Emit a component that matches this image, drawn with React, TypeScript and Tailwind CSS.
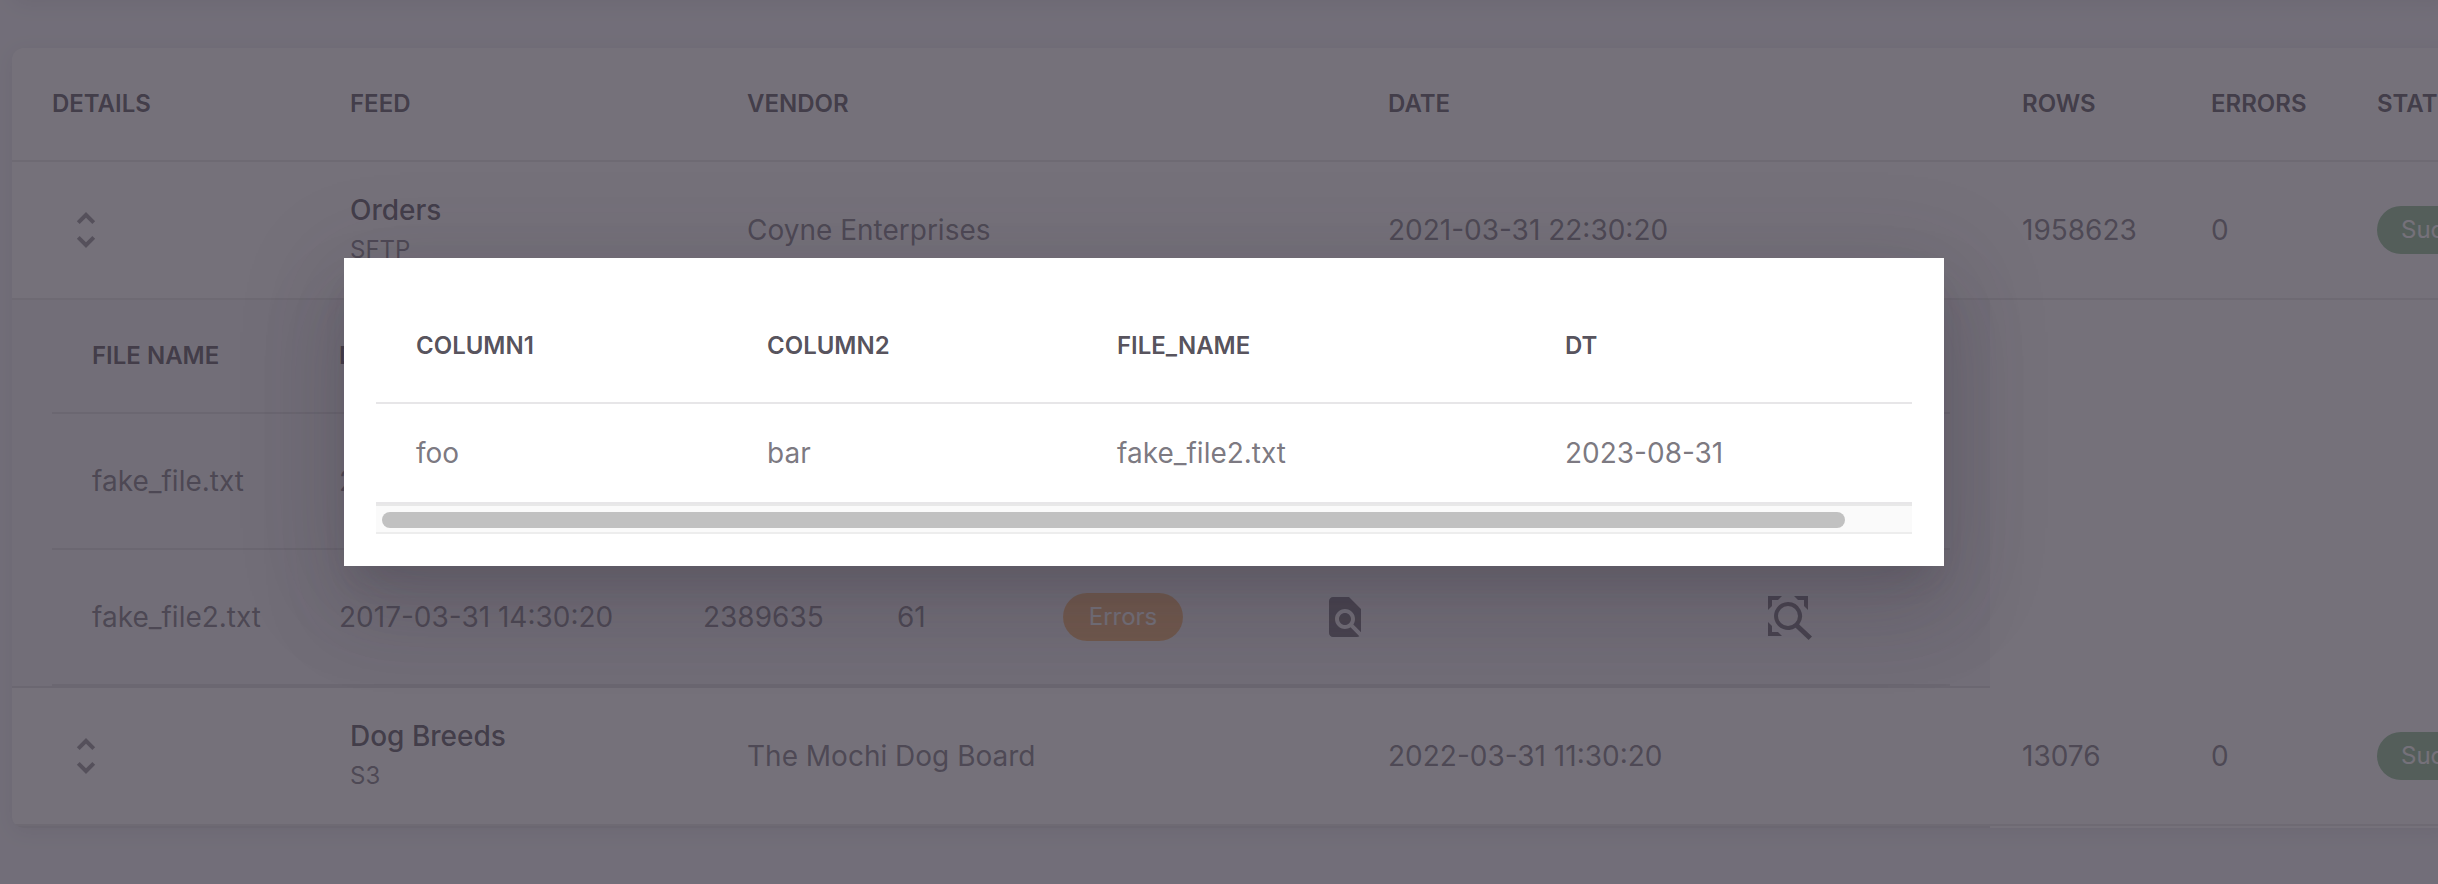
import React from 'react'

type Status = 'Success' | 'Errors'

interface Feed {
  name: string
  protocol: string
  vendor: string
  date: string
  rows: string
  errors: string
  status: Status
  files: FeedFile[]
}

interface FeedFile {
  name: string
  date: string
  rows: string
  errors: string
  status: Status
}

const feeds: Feed[] = [
  {
    name: 'Orders',
    protocol: 'SFTP',
    vendor: 'Coyne Enterprises',
    date: '2021-03-31 22:30:20',
    rows: '1958623',
    errors: '0',
    status: 'Success',
    files: [
      { name: 'fake_file.txt', date: '2021-03-31 22:30:20', rows: '1958623', errors: '0', status: 'Success' },
      { name: 'fake_file2.txt', date: '2017-03-31 14:30:20', rows: '2389635', errors: '61', status: 'Errors' },
    ],
  },
  {
    name: 'Dog Breeds',
    protocol: 'S3',
    vendor: 'The Mochi Dog Board',
    date: '2022-03-31 11:30:20',
    rows: '13076',
    errors: '0',
    status: 'Success',
    files: [],
  },
]

const line = 'border-b-2 border-[#3a3541]/12'
const head =
  'h-[114px] pl-8 first:pl-10 text-left align-middle text-2xl font-semibold whitespace-nowrap text-[#3a3541]/87 ' + line
const cell = 'pl-8 first:pl-10 align-middle whitespace-nowrap ' + line

function UnfoldIcon() {
  return (
    <svg viewBox="0 0 24 24" className="size-12 fill-[#3a3541]/54" aria-hidden="true">
      <path d="M12 5.83 15.17 9l1.41-1.41L12 3 7.41 7.59 8.83 9zm0 12.34L8.83 15l-1.41 1.41L12 21l4.59-4.59L15.17 15z" />
    </svg>
  )
}

function FindInPageIcon() {
  return (
    <svg viewBox="0 0 24 24" className="size-12 fill-[#3a3541]/75" aria-hidden="true">
      <path d="M20 19.59V8l-6-6H6c-1.1 0-1.99.9-1.99 2L4 20c0 1.1.89 2 1.99 2H18c.45 0 .85-.15 1.19-.4l-4.43-4.43c-.8.52-1.74.83-2.76.83-2.76 0-5-2.24-5-5s2.24-5 5-5 5 2.24 5 5c0 1.02-.31 1.96-.83 2.75zM9 13c0 1.66 1.34 3 3 3s3-1.34 3-3-1.34-3-3-3-3 1.34-3 3" />
    </svg>
  )
}

function ScanSearchIcon() {
  return (
    <svg viewBox="0 0 48 48" className="size-12 fill-[#3a3541]/75" aria-hidden="true">
      <path d="M4 3h14l-4 4H8v6l-4 4zM30 3h14v14l-4-4V7h-6zM4 29l4 4v6h6l4 4H4z" />
      <path d="M24 9a14 14 0 1 0 7.6 25.8L44.6 47l3.4-3.4L35.2 31.4A14 14 0 0 0 24 9zm0 4a10 10 0 1 1 0 20a10 10 0 0 1 0-20z" fillRule="evenodd" />
    </svg>
  )
}

function Chip({ status }: { status: Status }) {
  return (
    <span
      className={
        'inline-flex h-12 min-w-30 items-center justify-center rounded-full px-6 align-middle text-2xl text-white ' +
        (status === 'Errors' ? 'bg-[#f2b06a]' : 'bg-[#8fbf93]')
      }
    >
      {status}
    </span>
  )
}

function FileTable({ files }: { files: FeedFile[] }) {
  return (
    <table className="w-full table-fixed border-separate border-spacing-0" aria-label="Files">
      <colgroup>
        <col className="w-[255px]" />
        <col className="w-[364px]" />
        <col className="w-[194px]" />
        <col className="w-[166px]" />
        <col className="w-[242px]" />
        <col className="w-[443px]" />
        <col />
      </colgroup>
      <thead>
        <tr>
          <th className={head}>FILE NAME</th>
          <th className={head}>DATE</th>
          <th className={head}>ROWS</th>
          <th className={head}>ERRORS</th>
          <th className={head}>STATUS</th>
          <th className={head}>DETAILS</th>
          <th className={head}>PREVIEW</th>
        </tr>
      </thead>
      <tbody>
        {files.map(file => (
          <tr key={file.name} className="h-34">
            <td className={cell}>{file.name}</td>
            <td className={cell}>{file.date}</td>
            <td className={cell}>{file.rows}</td>
            <td className={cell}>{file.errors}</td>
            <td className={cell}>
              <Chip status={file.status} />
            </td>
            <td className={cell}>
              <button type="button" aria-label="View file details" className="block p-4">
                <FindInPageIcon />
              </button>
            </td>
            <td className={cell}>
              <button type="button" aria-label="Preview rows" className="block p-4">
                <ScanSearchIcon />
              </button>
            </td>
          </tr>
        ))}
      </tbody>
    </table>
  )
}

function FeedTable() {
  return (
    <table className="w-[2640px] table-fixed border-separate border-spacing-0" aria-label="Feeds">
      <colgroup>
        <col className="w-[306px]" />
        <col className="w-[397px]" />
        <col className="w-[641px]" />
        <col className="w-[634px]" />
        <col className="w-[189px]" />
        <col className="w-[166px]" />
        <col />
      </colgroup>
      <thead>
        <tr>
          <th className={head}>DETAILS</th>
          <th className={head}>FEED</th>
          <th className={head}>VENDOR</th>
          <th className={head}>DATE</th>
          <th className={head}>ROWS</th>
          <th className={head}>ERRORS</th>
          <th className={head}>STATUS</th>
        </tr>
      </thead>
      <tbody>
        {feeds.map(feed => (
          <React.Fragment key={feed.name}>
            <tr className="h-[138px]">
              <td className={cell}>
                <button type="button" aria-label={'Toggle files of ' + feed.name} className="block p-2.5">
                  <UnfoldIcon />
                </button>
              </td>
              <td className={cell}>
                <div className="leading-10 font-medium text-[#3a3541]/87">{feed.name}</div>
                <div className="text-2xl leading-10">{feed.protocol}</div>
              </td>
              <td className={cell}>{feed.vendor}</td>
              <td className={cell}>{feed.date}</td>
              <td className={cell}>{feed.rows}</td>
              <td className={cell}>{feed.errors}</td>
              <td className={cell}>
                <Chip status={feed.status} />
              </td>
            </tr>
            <tr>
              <td colSpan={4} className={'bg-[#f5f5f7] px-10 ' + line}>
                {feed.files.length > 0 && <FileTable files={feed.files} />}
              </td>
            </tr>
          </React.Fragment>
        ))}
      </tbody>
    </table>
  )
}

function PreviewDialog() {
  return (
    <div className="absolute inset-0 flex items-center justify-center bg-[#3a3541]/70 pr-[150px] pb-15">
      <div
        role="dialog"
        aria-modal="true"
        aria-label="Row preview"
        className="w-[1600px] max-w-full bg-white p-8 shadow-[0_22px_30px_-14px_rgba(58,53,65,0.2),0_48px_76px_6px_rgba(58,53,65,0.14),0_18px_92px_16px_rgba(58,53,65,0.12)]"
      >
        <table className="w-full table-fixed border-separate border-spacing-0" aria-label="Rows">
          <colgroup>
            <col className="w-[359px]" />
            <col className="w-[350px]" />
            <col className="w-[448px]" />
            <col />
          </colgroup>
          <thead>
            <tr>
              <th className={head}>COLUMN1</th>
              <th className={head}>COLUMN2</th>
              <th className={head}>FILE_NAME</th>
              <th className={head}>DT</th>
            </tr>
          </thead>
          <tbody>
            <tr className="h-25">
              <td className={cell}>foo</td>
              <td className={cell}>bar</td>
              <td className={cell}>fake_file2.txt</td>
              <td className={cell}>2023-08-31</td>
            </tr>
          </tbody>
        </table>
        <div className="border-t-2 border-b-2 border-t-[#e8e8e8] border-b-[#ededed] bg-[#fafafa] px-1.5 pt-1.5 pb-1">
          <div className="h-4 w-[96%] rounded-full bg-[#c1c1c1]" />
        </div>
      </div>
    </div>
  )
}

export default function App() {
  return (
    <div className="relative min-h-screen overflow-hidden bg-[#f4f5fa] font-['Inter','Liberation_Sans',sans-serif] text-[28px] leading-10 text-[#3a3541]/68">
      <main className="-mr-3 flex flex-col gap-12 pl-3">
        <div className="-mt-12 h-12 rounded-xl bg-white shadow-[0_4px_20px_rgba(58,53,65,0.1)]" />
        <section className="overflow-hidden rounded-xl bg-white shadow-[0_4px_20px_rgba(58,53,65,0.1)]">
          <FeedTable />
        </section>
      </main>
      <PreviewDialog />
    </div>
  )
}
